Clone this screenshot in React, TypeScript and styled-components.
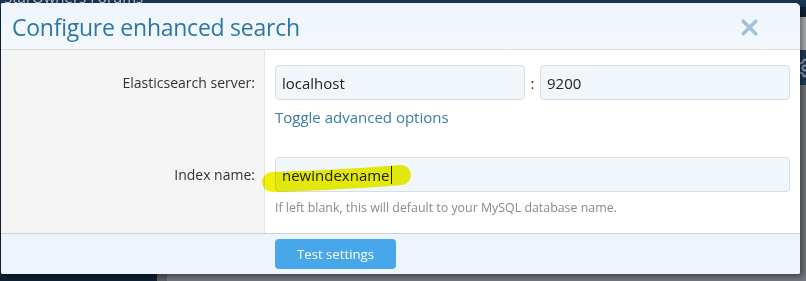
import React from "react";
import styled, { createGlobalStyle } from "styled-components";
import { Settings, X } from "lucide-react";

const GlobalStyle = createGlobalStyle`
  html, body {
    margin: 0;
    padding: 0;
    width: 806px;
    height: 281px;
    overflow: hidden;
    font-family: "Open Sans", "Noto Sans", sans-serif;
  }
`;

// page behind the overlay
const Page = styled.div`
  position: relative;
  width: 806px;
  height: 281px;
  display: flex;
  flex-direction: column;
  background: #0e2234;
  overflow: hidden;
`;

const TopBar = styled.div`
  height: 17px;
  flex: none;
  background: #183553;
  color: #b9c6d3;
  font-size: 15px;
  line-height: 15px;
  padding-left: 4px;
  margin-top: -10px;
  overflow: hidden;
`;

const Main = styled.div`
  flex: 1;
  display: flex;
  margin-top: 10px;
`;

const Sidebar = styled.div`
  width: 157px;
  flex: none;
  background: #0e2234;
`;

const Content = styled.div`
  flex: 1;
  display: flex;
  flex-direction: column;
  border-left: 10px solid #5f6367;
`;

const SubBar = styled.div`
  height: 33px;
  background: #b4b7ba;
`;

const NavBar = styled.div`
  height: 35px;
  background: #1f3d59;
  display: flex;
  justify-content: flex-end;
  align-items: center;
  color: #8fa6bb;
  margin-right: -9px;
`;

const Panel = styled.div`
  flex: 1;
  background: #777b7f;
  display: flex;
  align-items: flex-end;
`;

const Stats = styled.div`
  display: flex;
  width: 100%;
  font-size: 15px;
  color: #1f2224;
  line-height: 18px;
  margin-bottom: -13px;
  padding-left: 193px;
  gap: 22px;
`;

const StatValue = styled.span`
  margin-left: auto;
  margin-right: 54px;
`;

// dialog
const Dialog = styled.div`
  position: absolute;
  left: 1px;
  top: 3px;
  width: 799px;
  height: 271px;
  background: #fff;
  border-radius: 2px 5px 2px 2px;
  box-shadow: 3px 3px 6px rgba(0, 0, 0, 0.45);
  display: flex;
  flex-direction: column;
  overflow: hidden;
`;

const Header = styled.div`
  height: 46px;
  flex: none;
  display: flex;
  align-items: center;
  justify-content: space-between;
  padding: 0 38px 0 11px;
  background: linear-gradient(to bottom, #eef5fc, #f4f8fd);
  border-bottom: 1px solid #d5dce3;
`;

const Title = styled.h1`
  margin: 0;
  font-family: "Open Sans", "Noto Sans", sans-serif;
  font-weight: 400;
  font-size: 23px;
  letter-spacing: -0.25px;
  color: #2b78a6;
  line-height: 30px;
  padding-top: 2px;
`;

const Close = styled.span`
  color: #a2c2dc;
  display: flex;
  padding-top: 3px;
`;

const Body = styled.div`
  flex: 1;
  display: flex;
  flex-direction: column;
`;

const Row = styled.div<{ $grow?: boolean }>`
  display: grid;
  grid-template-columns: 264px 1fr;
  flex: ${(p) => (p.$grow ? 1 : "none")};
`;

const Label = styled.div`
  background: #f5f5f5;
  border-right: 1px solid #e3e3e3;
  text-align: right;
  padding: 15px 9px 0 0;
  font-size: 14px;
  line-height: 35px;
  color: #333;
`;

const Control = styled.div`
  padding: 15px 10px;
  position: relative;
`;

const Pair = styled.div`
  display: flex;
  align-items: center;
`;

const Colon = styled.span`
  width: 15px;
  text-align: center;
  font-size: 15px;
  color: #333;
`;

const Input = styled.div`
  flex: 1;
  height: 33px;
  box-sizing: content-box;
  border: 1px solid #d7dde3;
  border-radius: 4px;
  background: #f1f6fb;
  padding: 0 6px;
  display: flex;
  align-items: center;
  font-size: 15px;
  color: #222;
  position: relative;
`;

const Caret = styled.span`
  display: inline-block;
  width: 1px;
  height: 18px;
  background: #111;
  margin-left: 1px;
`;

const Link = styled.a`
  display: block;
  margin-top: 7px;
  font-size: 15px;
  line-height: 20px;
  color: #3a7ca5;
  text-decoration: none;
`;

const Hint = styled.div`
  margin-top: 8px;
  font-size: 12.4px;
  line-height: 16px;
  color: #8a8a8a;
`;

// yellow highlighter stroke drawn over the index name
const Marker = styled.svg`
  position: absolute;
  left: -12px;
  top: 20px;
  mix-blend-mode: multiply;
  pointer-events: none;
`;

const Footer = styled.div`
  height: 41px;
  flex: none;
  border-top: 1px solid #c9d1d9;
  background: #edf4fc;
  padding: 5px 0 0 274px;
  box-sizing: border-box;
`;

const Button = styled.button`
  width: 121px;
  height: 30px;
  border: none;
  border-radius: 4px;
  background: #47a7ea;
  color: #fff;
  font-family: "Open Sans", "Noto Sans", sans-serif;
  font-size: 13.2px;
  padding: 0;
`;

const App: React.FC = () => {
  return (
    <>
      <GlobalStyle />
      <Page>
        <TopBar>StarOwners Forums</TopBar>
        <Main>
          <Sidebar />
          <Content>
            <SubBar />
            <NavBar>
              <Settings size={20} strokeWidth={2.5} />
            </NavBar>
            <Panel>
              <Stats>
                <span>Status</span>
                <span>Documents</span>
                <StatValue>2,266,276 (771.1 MB)</StatValue>
              </Stats>
            </Panel>
          </Content>
        </Main>

        <Dialog>
          <Header>
            <Title>Configure enhanced search</Title>
            <Close>
              <X size={25} strokeWidth={3.4} />
            </Close>
          </Header>
          <Body>
            <Row>
              <Label>Elasticsearch server:</Label>
              <Control>
                <Pair>
                  <Input>localhost</Input>
                  <Colon>:</Colon>
                  <Input>9200</Input>
                </Pair>
                <Link href="#">Toggle advanced options</Link>
              </Control>
            </Row>
            <Row $grow>
              <Label>Index name:</Label>
              <Control>
                <Input>
                  newindexname
                  <Caret />
                </Input>
                <Marker width="170" height="36" viewBox="0 0 170 36">
                  <path
                    d="M19 20 C 50 19, 100 17, 148 13"
                    stroke="#f0f00c"
                    strokeWidth="20"
                    strokeLinecap="round"
                    fill="none"
                  />
                </Marker>
                <Hint>If left blank, this will default to your MySQL database name.</Hint>
              </Control>
            </Row>
          </Body>
          <Footer>
            <Button>Test settings</Button>
          </Footer>
        </Dialog>
      </Page>
    </>
  );
};

export default App;
